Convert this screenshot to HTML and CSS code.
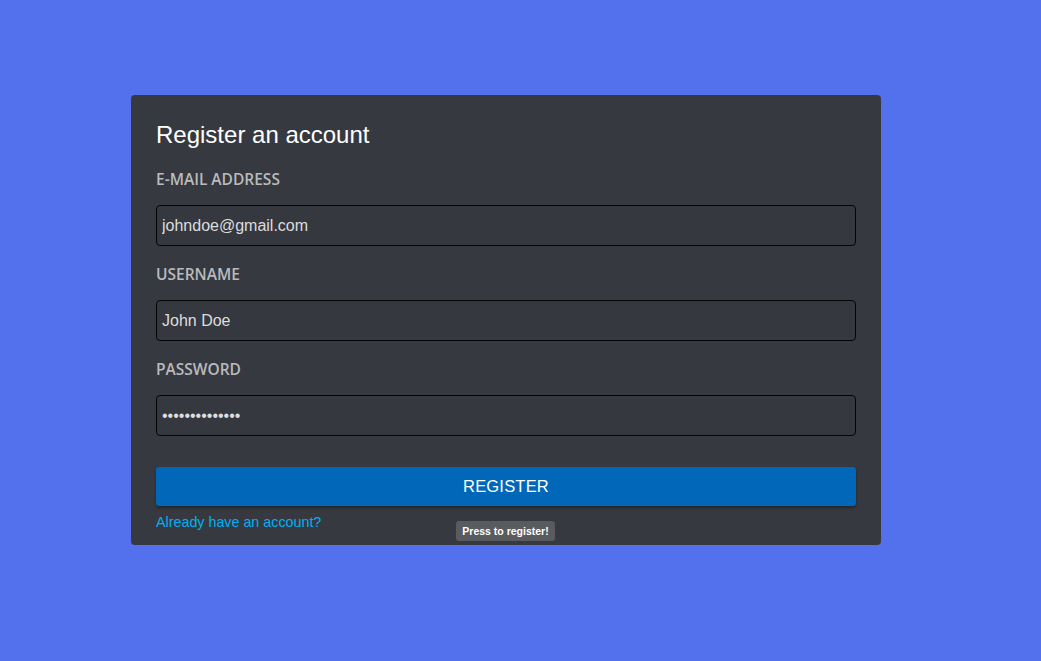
FILE: index.html
```html
<!DOCTYPE html>
<html lang="en">
<head>
<meta charset="utf-8">
<title>Register</title>
<link rel="stylesheet" href="styles.css">
</head>
<body>
<main class="page">
  <form class="card">
    <h2 class="title">Register an account</h2>
    <div class="field">
      <label class="label" for="email">E-MAIL ADDRESS</label>
      <input class="input" id="email" type="text" value="johndoe@gmail.com">
    </div>
    <div class="field">
      <label class="label" for="username">USERNAME</label>
      <input class="input" id="username" type="text" value="John Doe">
    </div>
    <div class="field">
      <label class="label" for="password">PASSWORD</label>
      <input class="input" id="password" type="password" value="supersecret123">
    </div>
    <div class="actions">
      <button class="button" type="button">REGISTER</button>
      <span class="tooltip">Press to register!</span>
    </div>
    <a class="link" href="#">Already have an account?</a>
  </form>
</main>
</body>
</html>
```

FILE: styles.css
```css
* { box-sizing: border-box; }
html, body {
  margin: 0;
  height: 100%;
}
body {
  background: #5370ed;
  font-family: "Liberation Sans", Arial, sans-serif;
}
.page {
  padding: 95px 0 0 131px;
}
.card {
  width: 750px;
  height: 450px;
  background: #36393f;
  border-radius: 4px;
  padding: 26px 25px 0;
  display: flex;
  flex-direction: column;
}
.title {
  margin: 0 0 21px;
  font-size: 24px;
  font-weight: normal;
  line-height: 27px;
  color: #ffffff;
}
.field {
  display: flex;
  flex-direction: column;
  margin-bottom: 18px;
}
.label {
  font-family: "Open Sans", "Noto Sans", sans-serif;
  font-weight: 650;
  font-size: 15.5px;
  line-height: 20px;
  color: #b9bbbe;
  margin-bottom: 16px;
}
.input {
  width: 700px;
  height: 41px;
  background: #35383e;
  border: 1px solid #050506;
  border-radius: 4px;
  padding: 0 5px;
  font-family: "Liberation Sans", Arial, sans-serif;
  font-size: 16px;
  color: #dcddde;
  outline: none;
}
.actions {
  position: relative;
  margin-top: 13px;
}
.button {
  display: block;
  width: 700px;
  height: 39px;
  background: #0067b9;
  border: none;
  border-radius: 3px;
  box-shadow: 0 2px 3px rgba(0, 0, 0, 0.35);
  color: #ffffff;
  font-family: "Liberation Sans", Arial, sans-serif;
  font-size: 16.5px;
  letter-spacing: 0.2px;
  cursor: pointer;
}
.tooltip {
  position: absolute;
  left: 300px;
  top: 54px;
  width: 99px;
  height: 20px;
  background: #5a5b5e;
  border-radius: 3px;
  color: #ffffff;
  font-size: 10.5px;
  font-weight: bold;
  line-height: 20px;
  text-align: center;
}
.link {
  margin-top: 8px;
  font-size: 14.3px;
  line-height: 16px;
  color: #00b0f4;
  text-decoration: none;
  align-self: flex-start;
}
```
